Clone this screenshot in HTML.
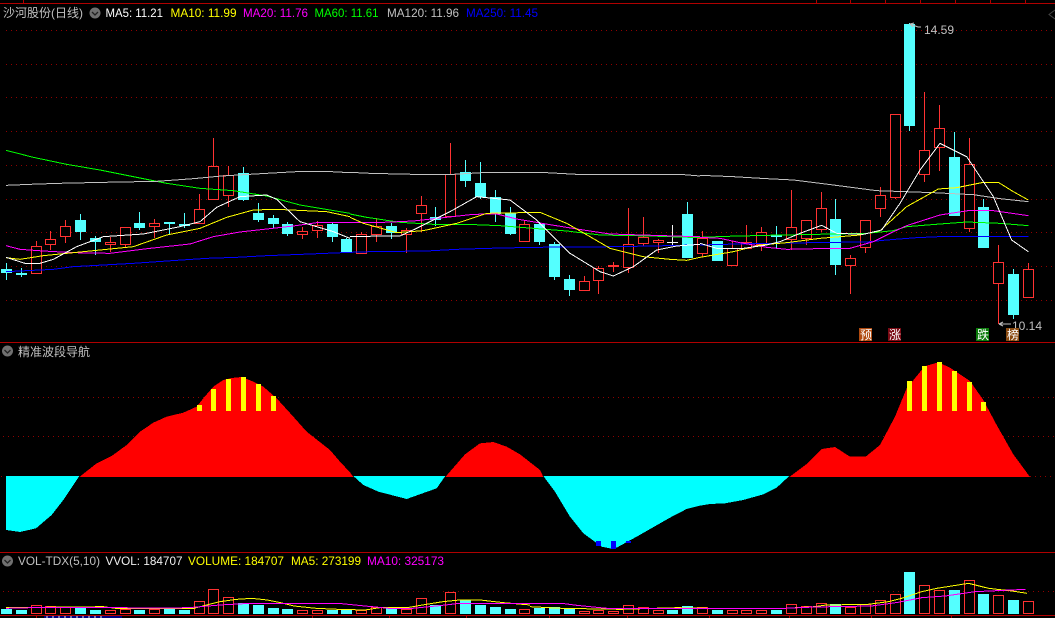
<!DOCTYPE html>
<html><head><meta charset="utf-8"><style>
html,body{margin:0;padding:0;background:#000;width:1055px;height:618px;overflow:hidden}
svg{display:block;position:absolute;left:0;top:0}
text{font-family:"Liberation Sans","WenQuanYi Zen Hei","Noto Sans CJK SC",sans-serif;font-size:12px}
polyline{fill:none;stroke-width:1;vector-effect:non-scaling-stroke;shape-rendering:crispEdges}
</style></head><body>
<svg width="1055" height="618" viewBox="0 0 1055 618">
<!-- frame -->
<g shape-rendering="crispEdges">
<rect x="0" y="3" width="1055" height="1" fill="#b00000"/>
<rect x="0" y="342" width="1055" height="1" fill="#b00000"/>
<rect x="0" y="552" width="1055" height="1" fill="#b00000"/>
<rect x="0" y="615" width="1055" height="1" fill="#b00000"/>
<path d="M23.5 0V3M816.5 0V3M850.5 0V3M885.5 0V3M920.5 0V3M955.5 0V3M990.5 0V3M1025.5 0V3M36.5 616V618M312.5 616V618M389.5 616V618M466.5 616V618M549.5 616V618M627.5 616V618M709.5 616V618M789.5 616V618M871.5 616V618M951.5 616V618" stroke="#b00000" fill="none"/>
<rect x="44" y="616" width="78" height="2" fill="#000080"/>
<path d="M46 617H105" stroke="#e8e8e8" stroke-dasharray="2 4" fill="none"/>
<!-- grid -->
<path d="M6 30.5H1055M6 64.5H1055M6 97.5H1055M6 131.5H1055M6 165.5H1055M6 199.5H1055M6 232.5H1055M6 266.5H1055M6 300.5H1055M3 397.5H1055M3 436.5H1055M1030 476.5H1055M1 476.5H6M3 591.5H1055" stroke="#900000" stroke-dasharray="1 4" fill="none"/>
</g>
<path d="M1055 10L1049 14.5L1055 19" stroke="#444" fill="none"/>

<!-- candles -->
<g shape-rendering="crispEdges">
<path stroke="#ff3232" fill="#000" d="M36.5 241V246M31.5 246.5h10v27h-10z
M50.5 231V239M50.5 245V250M45.5 239.5h10v5h-10z
M65.5 220V226M65.5 237V243M60.5 226.5h10v10h-10z
M110.5 237V242M110.5 245V252M105.5 242.5h10v2h-10z
M125.5 245V247M120.5 227.5h10v17h-10z
M154.5 219V223M154.5 227V238M149.5 223.5h10v3h-10z
M199.5 194V209M194.5 209.5h10v14h-10z
M213.5 138V166M208.5 166.5h10v33h-10z
M228.5 166V175M228.5 196V207M223.5 175.5h10v20h-10z
M302.5 227V231M302.5 235V239M297.5 231.5h10v3h-10z
M317.5 221V225M317.5 231V238M312.5 225.5h10v5h-10z
M361.5 232V234M356.5 234.5h10v19h-10z
M376.5 218V226M376.5 235V242M371.5 226.5h10v8h-10z
M406.5 228V230M406.5 235V253M401.5 230.5h10v4h-10z
M421.5 196V205M421.5 214V232M416.5 205.5h10v8h-10z
M450.5 143V174M445.5 174.5h10v42h-10z
M524.5 220V224M519.5 224.5h10v17h-10z
M584.5 276V281M579.5 281.5h10v9h-10z
M598.5 266V268M598.5 281V294M593.5 268.5h10v12h-10z
M613.5 262V265M613.5 267V272M608.5 265.5h10v1h-10z
M628.5 208V244M628.5 268V273M623.5 244.5h10v23h-10z
M643.5 217V237M643.5 244V246M638.5 237.5h10v6h-10z
M658.5 239V240M658.5 243V253M653.5 240.5h10v2h-10z
M702.5 231V238M702.5 254V257M697.5 238.5h10v15h-10z
M732.5 241V248M727.5 248.5h10v17h-10z
M746.5 225V242M741.5 242.5h10v6h-10z
M761.5 227V232M761.5 245V251M756.5 232.5h10v12h-10z
M791.5 190V227M791.5 240V250M786.5 227.5h10v12h-10z
M806.5 239V245M801.5 220.5h10v18h-10z
M821.5 192V208M821.5 230V232M816.5 208.5h10v21h-10z
M850.5 255V258M850.5 266V294M845.5 258.5h10v7h-10z
M865.5 248V253M860.5 220.5h10v27h-10z
M880.5 187V195M880.5 209V217M875.5 195.5h10v13h-10z
M895.5 198V199M890.5 114.5h10v83h-10z
M924.5 92V150M924.5 175V182M919.5 150.5h10v24h-10z
M939.5 105V128M939.5 148V171M934.5 128.5h10v19h-10z
M969.5 138V164M969.5 229V232M964.5 164.5h10v64h-10z
M998.5 245V262M998.5 284V324M993.5 262.5h10v21h-10z
M1028.5 263V269M1023.5 269.5h10v28h-10z"/>
<path stroke="#54ffff" fill="none" d="M6.5 263V280M21.5 268V277M80.5 214V240M95.5 236V255M139.5 212V230M169.5 222V235M184.5 213V228M243.5 167V201M258.5 203V222M273.5 215V228M287.5 222V236M332.5 223V242M346.5 238V252M391.5 223V239M435.5 207V226M465.5 160V187M480.5 162V199M495.5 190V222M510.5 207V235M539.5 222V245M554.5 242V280M569.5 275V296M687.5 202V258M717.5 241V261M776.5 226V249M835.5 199V275M909.5 23V131M954.5 132V216M983.5 199V248M1013.5 269V319"/>
<path fill="#54ffff" d="M1 269h11v4h-11zM16 273h11v2h-11zM75 220h11v12h-11zM90 238h11v4h-11zM134 223h11v5h-11zM164 222h11v2h-11zM179 224h11v2h-11zM238 173h11v27h-11zM253 213h11v7h-11zM268 218h11v6h-11zM282 224h11v10h-11zM327 224h11v13h-11zM341 239h11v13h-11zM386 226h11v7h-11zM430 217h11v3h-11zM460 172h11v9h-11zM475 183h11v14h-11zM490 197h11v17h-11zM505 213h11v21h-11zM534 224h11v18h-11zM549 244h11v33h-11zM564 279h11v11h-11zM682 214h11v44h-11zM712 241h11v20h-11zM771 235h11v2h-11zM830 219h11v46h-11zM904 24h11v102h-11zM949 157h11v59h-11zM978 207h11v41h-11zM1008 274h11v41h-11z"/>
<path stroke="#f4f4f4" fill="none" d="M672.5 225V245M667 242.5H678"/>
</g>

<!-- MA lines: zoom 1 -->
<g transform="translate(0,140) scale(.33333)">
<polyline stroke="#00ff00" points="18,31 100,52 200,73 300,90 400,110 500,130 600,145 700,152 800,168 900,195 1050,220"/>
<polyline stroke="#c0c0c0" points="18,136 90,133 175,130 310,127 470,124 580,116 665,108 800,100 890,95 975,94 1050,98"/>
<polyline stroke="#0000ff" points="18,395 160,388 220,380 400,370 530,361 620,355 710,352 800,347 930,342 1050,337"/>
<polyline stroke="#ff00ff" points="18,317 60,328 130,333 220,338 330,340 450,325 570,312 640,290 720,276 800,267 880,258 950,248 1050,247"/>
<polyline stroke="#ffff00" points="18,353 60,358 130,347 200,340 300,330 400,320 500,285 600,265 680,232 760,210 830,208 980,215 1050,230"/>
<polyline stroke="#ffffff" points="18,352 75,370 120,370 160,358 230,320 310,290 430,282 540,260 600,245 650,202 720,170 800,165 830,178 900,245 1000,275 1050,295"/>
</g>
<!-- zoom 2 -->
<g transform="translate(350,140) scale(.33333)">
<polyline stroke="#00ff00" points="0,222 50,232 150,247 250,253 350,253 450,257 550,265 650,273 750,285 900,288 1050,293"/>
<polyline stroke="#c0c0c0" points="0,97 60,100 190,103 310,103 415,97 590,98 680,103 990,103 1050,108"/>
<polyline stroke="#0000ff" points="0,337 60,335 230,333 320,328 415,325 550,322 800,320 1000,316 1050,313"/>
<polyline stroke="#ff00ff" points="0,248 100,247 190,243 280,233 370,223 440,222 500,237 600,254 700,270 780,282 1040,290 1050,290"/>
<polyline stroke="#ffff00" points="0,232 40,250 140,278 220,272 320,250 410,220 570,217 650,250 720,290 780,325 880,350 960,358 1010,361 1050,352"/>
<polyline stroke="#ffffff" points="0,290 100,288 150,288 200,265 300,215 380,170 480,180 560,240 660,340 750,395 790,408 850,380 920,330 980,318 1050,313"/>
</g>
<!-- zoom 3 -->
<g transform="translate(700,0) scale(.33333)">
<polyline stroke="#00ff00" points="0,712 80,709 200,706 350,703 500,700 580,692 620,680 720,672 800,666 900,670 985,677"/>
<polyline stroke="#c0c0c0" points="0,526 100,530 200,536 280,540 400,555 530,572 700,578 820,584 900,596 985,605"/>
<polyline stroke="#0000ff" points="0,735 150,731 400,727 500,726 560,720 650,713 740,709 985,709"/>
<polyline stroke="#ff00ff" points="0,712 60,715 120,728 200,742 260,748 350,746 450,745 520,725 570,700 620,677 720,645 810,631 880,632 985,647"/>
<polyline stroke="#ffff00" points="0,772 100,755 180,735 260,728 360,715 480,705 540,692 620,620 715,567 770,563 850,547 895,547 940,575 985,600"/>
<polyline stroke="#ffffff" points="0,730 50,745 130,745 200,735 240,725 300,700 365,676 410,700 490,703 545,690 600,610 660,510 720,430 800,470 880,590 935,720 985,755"/>
</g>

<!-- price labels -->
<path d="M910 24L918 27H921M914 23L910 24L913 27M999 324H1011M999 324L1003 322M999 324L1003 326" stroke="#c0c0c0" fill="none"/>
<text x="924" y="34" fill="#c0c0c0" textLength="30" lengthAdjust="spacingAndGlyphs">14.59</text>
<text x="1012" y="330" fill="#c0c0c0" textLength="30" lengthAdjust="spacingAndGlyphs">10.14</text>

<!-- markers -->
<g shape-rendering="crispEdges">
<rect x="859" y="328" width="13" height="13" fill="#b04a0f"/>
<rect x="888" y="328" width="13" height="13" fill="#7a0a14"/>
<rect x="976" y="328" width="13" height="13" fill="#0a7a0a"/>
<rect x="1006" y="328" width="13" height="13" fill="#8a4a10"/>
</g>
<g fill="#fff">
<text x="860" y="339">预</text>
<text x="889" y="339">涨</text>
<text x="977" y="339">跌</text>
<text x="1007" y="339">榜</text>
</g>

<!-- oscillator -->
<g shape-rendering="crispEdges">
<g transform="translate(0,355) scale(.33333)">
<polygon fill="#00ffff" points="18,363 18,525 60,531 108,520 155,480 190,435 238,363"/>
<polygon fill="#ff0000" points="238,366 290,325 335,303 380,270 420,230 460,203 500,185 550,173 590,155 610,130 640,95 670,75 695,69 725,66 760,80 790,95 830,130 880,185 920,230 990,285 1020,320 1050,352 1050,366"/>
</g>
<g transform="translate(350,355) scale(.33333)">
<polygon fill="#ff0000" points="0,352 10,366 0,366"/>
<polygon fill="#00ffff" points="10,363 40,390 85,410 170,432 260,400 286,363"/>
<polygon fill="#ff0000" points="286,366 345,298 390,265 430,261 470,275 510,298 570,345 580,366"/>
<polygon fill="#00ffff" points="580,363 615,410 660,485 700,535 755,575 780,580 800,578 860,545 960,488 1010,462 1050,452 1050,363"/>
</g>
<g transform="translate(700,355) scale(.33333)">
<polygon fill="#00ffff" points="0,363 0,452 30,447 75,445 130,435 190,418 230,398 268,363"/>
<polygon fill="#ff0000" points="268,366 320,327 365,282 405,276 450,305 497,305 540,270 585,185 620,100 665,45 680,32 715,22 750,38 810,78 850,135 890,210 940,298 990,366"/>
</g>
<path fill="#ffff00" d="M197 405h5v6h-5zM211 389h5v22h-5zM226 379h5v32h-5zM241 377h5v34h-5zM256 384h5v27h-5zM271 396h5v15h-5zM907 381h5v30h-5zM922 366h5v45h-5zM937 362h5v49h-5zM952 371h5v40h-5zM967 382h5v29h-5zM981 402h5v9h-5z"/>
<path fill="#0000ff" d="M596 541h5v5h-5zM611 541h5v8h-5zM626 541h5v2h-5z"/>
</g>

<!-- volume bars -->
<g shape-rendering="crispEdges">
<path stroke="#ff3232" fill="#000" d="M31.5 605.5h10v8h-10zM45.5 606.5h10v7h-10zM60.5 607.5h10v6h-10zM105.5 610.5h10v3h-10zM120.5 609.5h10v4h-10zM149.5 609.5h10v4h-10zM194.5 601.5h10v12h-10zM208.5 589.5h10v24h-10zM223.5 597.5h10v16h-10zM297.5 610.5h10v3h-10zM312.5 610.5h10v3h-10zM356.5 610.5h10v3h-10zM371.5 607.5h10v6h-10zM401.5 609.5h10v4h-10zM416.5 598.5h10v15h-10zM445.5 592.5h10v21h-10zM519.5 609.5h10v4h-10zM579.5 611.5h10v2h-10zM593.5 610.5h10v3h-10zM608.5 611.5h10v2h-10zM623.5 605.5h10v8h-10zM638.5 607.5h10v6h-10zM653.5 610.5h10v3h-10zM697.5 607.5h10v6h-10zM727.5 610.5h10v3h-10zM741.5 610.5h10v3h-10zM756.5 610.5h10v3h-10zM786.5 604.5h10v9h-10zM801.5 606.5h10v7h-10zM816.5 603.5h10v10h-10zM845.5 607.5h10v6h-10zM860.5 604.5h10v9h-10zM875.5 600.5h10v13h-10zM890.5 594.5h10v19h-10zM919.5 585.5h10v28h-10zM934.5 590.5h10v23h-10zM964.5 580.5h10v33h-10zM993.5 595.5h10v18h-10zM1023.5 601.5h10v12h-10z"/>
<path fill="#54ffff" d="M1 609h11v5h-11zM16 610h11v4h-11zM75 608h11v6h-11zM90 610h11v4h-11zM134 610h11v4h-11zM164 609h11v5h-11zM179 610h11v4h-11zM238 603h11v11h-11zM253 605h11v9h-11zM268 608h11v6h-11zM282 609h11v5h-11zM327 610h11v4h-11zM341 610h11v4h-11zM386 607h11v7h-11zM430 605h11v9h-11zM460 600h11v14h-11zM475 605h11v9h-11zM490 607h11v7h-11zM505 609h11v5h-11zM534 608h11v6h-11zM549 607h11v7h-11zM564 609h11v5h-11zM667 610h11v4h-11zM682 606h11v8h-11zM712 610h11v4h-11zM771 610h11v4h-11zM830 604h11v10h-11zM904 572h11v42h-11zM949 590h11v24h-11zM978 594h11v20h-11zM1008 600h11v14h-11z"/>
</g>
<g transform="translate(0,550) scale(.33807,.33333)">
<polyline stroke="#ffff00" points="18,173 305,170 350,176 520,176 570,176 600,168 650,155 700,148 745,145 790,150 830,158 870,168 935,175 1000,178 1080,180 1130,172 1210,172 1250,165 1310,155 1360,150 1420,150 1490,158 1568,165"/>
<polyline stroke="#ff00ff" points="18,175 130,172 520,174 570,172 650,165 740,160 1000,160 1100,170 1160,176 1220,175 1300,167 1360,160 1568,160"/>
</g>
<g transform="translate(530,550) scale(.33478,.33333)">
<polyline stroke="#ffff00" points="0,170 95,175 270,178 440,173 540,175 760,175 850,170 885,165 1010,163 1070,155 1110,145 1170,125 1215,115 1310,100 1370,115 1440,123 1485,130"/>
<polyline stroke="#ff00ff" points="0,160 95,160 140,166 230,175 760,175 850,171 1020,168 1100,157 1170,143 1240,138 1330,125 1480,118"/>
</g>

<!-- header text -->
<text x="3" y="17" fill="#c0c0c0" textLength="80" lengthAdjust="spacingAndGlyphs">沙河股份(日线)</text>
<circle cx="95" cy="13" r="5.5" fill="#707070"/><path d="M92 12l3 3 3-3" stroke="#222" fill="none" stroke-width="1.3"/>
<text x="105.5" y="17" fill="#ffffff" textLength="57.5" lengthAdjust="spacingAndGlyphs">MA5: 11.21</text>
<text x="170.5" y="17" fill="#ffff00" textLength="66" lengthAdjust="spacingAndGlyphs">MA10: 11.99</text>
<text x="243" y="17" fill="#ff00ff" textLength="65" lengthAdjust="spacingAndGlyphs">MA20: 11.76</text>
<text x="314.5" y="17" fill="#00ff00" textLength="64" lengthAdjust="spacingAndGlyphs">MA60: 11.61</text>
<text x="387" y="17" fill="#c0c0c0" textLength="72" lengthAdjust="spacingAndGlyphs">MA120: 11.96</text>
<text x="466" y="17" fill="#0000ff" textLength="72" lengthAdjust="spacingAndGlyphs">MA250: 11.45</text>

<circle cx="7.5" cy="351" r="5.5" fill="#707070"/><path d="M4.5 350l3 3 3-3" stroke="#222" fill="none" stroke-width="1.3"/>
<text x="18" y="356" fill="#c0c0c0">精准波段导航</text>

<circle cx="7.5" cy="561" r="5.5" fill="#707070"/><path d="M4.5 560l3 3 3-3" stroke="#222" fill="none" stroke-width="1.3"/>
<text x="18" y="565" fill="#c0c0c0" textLength="82" lengthAdjust="spacingAndGlyphs">VOL-TDX(5,10)</text>
<text x="105.5" y="565" fill="#f0f0f0" textLength="77" lengthAdjust="spacingAndGlyphs">VVOL: 184707</text>
<text x="188" y="565" fill="#ffff00" textLength="96" lengthAdjust="spacingAndGlyphs">VOLUME: 184707</text>
<text x="291" y="565" fill="#ffff00" textLength="70" lengthAdjust="spacingAndGlyphs">MA5: 273199</text>
<text x="367" y="565" fill="#ff00ff" textLength="77" lengthAdjust="spacingAndGlyphs">MA10: 325173</text>
</svg>
</body></html>
